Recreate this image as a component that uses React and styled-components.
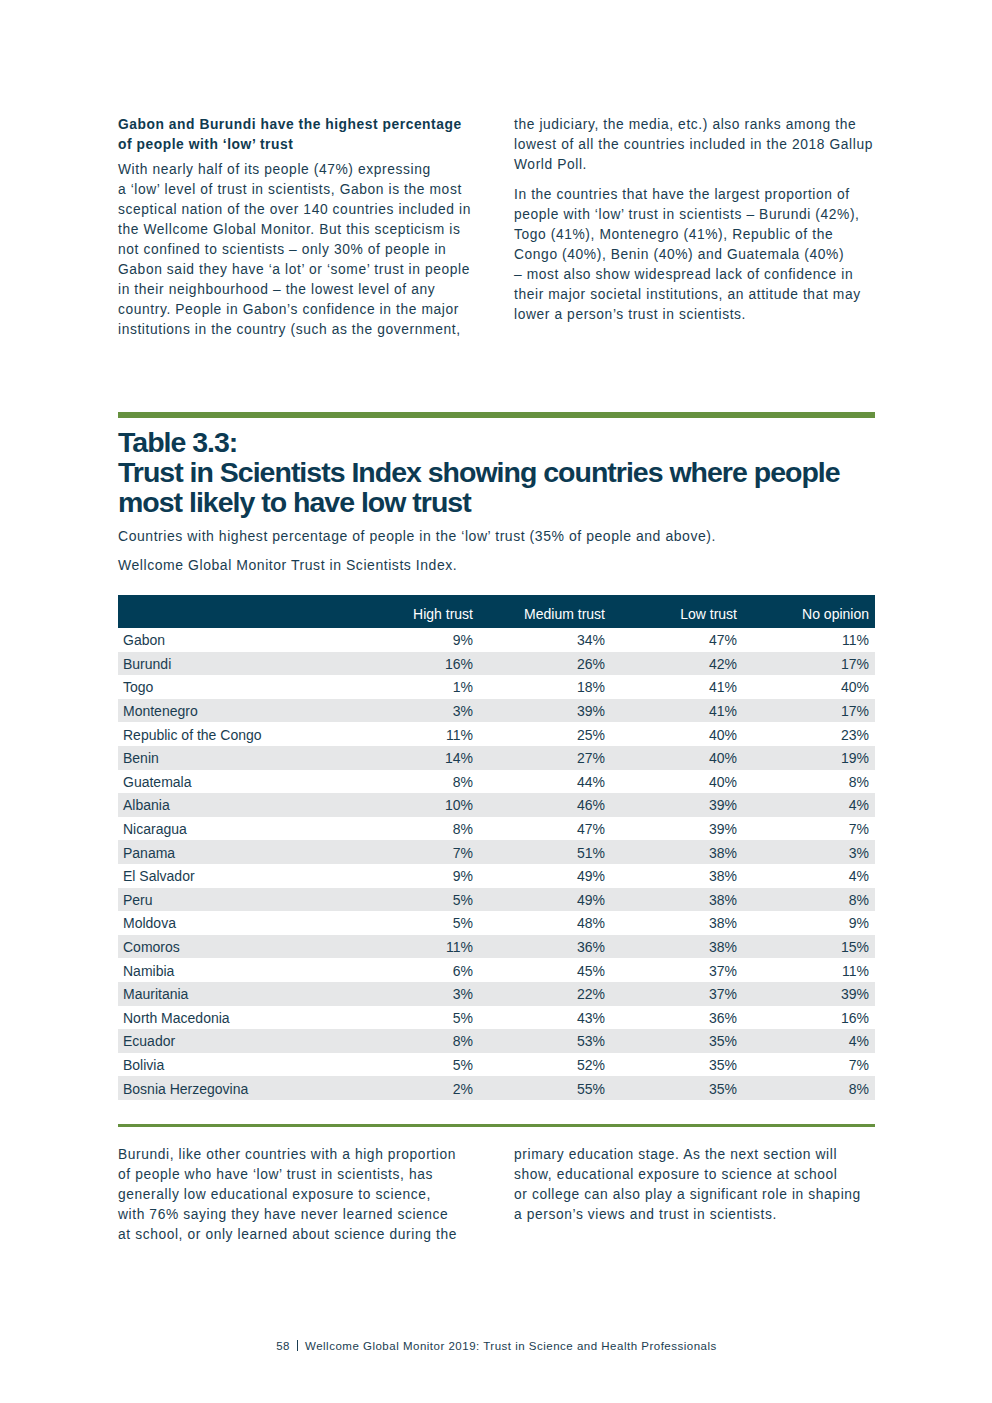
import React from "react";
import styled, { createGlobalStyle } from "styled-components";

const GlobalStyle = createGlobalStyle`
  html, body {
    margin: 0;
    padding: 0;
    background: #ffffff;
  }
  body {
    font-family: "Liberation Sans", Arial, sans-serif;
    color: #163a4e;
  }
`;

const Page = styled.div`
  width: 992px;
  height: 1403px;
  box-sizing: border-box;
  padding: 115px 117px 0 118px;
  display: flex;
  flex-direction: column;
`;

const Columns = styled.div`
  display: grid;
  grid-template-columns: 357px 361px;
  column-gap: 39px;
  margin-top: ${(p) => p.$top || 0}px;
`;

const Column = styled.div`
  display: flex;
  flex-direction: column;
  gap: ${(p) => p.$gap || 0}px;
`;

const Lead = styled.div`
  font-weight: bold;
  font-size: 13.8px;
  line-height: 20px;
  letter-spacing: 0.55px;
  color: #0f3a50;
`;

const Para = styled.div`
  font-size: 13.8px;
  line-height: 20px;
  letter-spacing: 0.6px;
  color: #1a3d51;
`;

const Line = styled.span`
  display: block;
  white-space: nowrap;
`;

const Rule = styled.div`
  height: ${(p) => p.$thick}px;
  background: #66913f;
  margin-top: ${(p) => p.$top}px;
`;

const Title = styled.h2`
  margin: 9px 0 0;
  font-family: "Liberation Sans", sans-serif;
  font-weight: bold;
  font-size: 28.5px;
  line-height: 30px;
  letter-spacing: -1px;
  color: #0c3a52;
`;

const Caption = styled.p`
  margin: 9px 0 0;
  font-family: "Liberation Sans", sans-serif;
  font-size: 14px;
  line-height: 20px;
  letter-spacing: 0.55px;
  color: #1a3d51;
`;

const Table = styled.table`
  margin-top: 20px;
  width: 757px;
  border-collapse: collapse;
  font-family: "Liberation Sans", sans-serif;
  font-size: 14px;
  color: #1a3d51;
`;

const HeadCell = styled.th`
  background: #013d57;
  color: #ffffff;
  font-weight: normal;
  height: 33px;
  padding: 4px 6px 0 5px;
  text-align: ${(p) => (p.$left ? "left" : "right")};
  width: ${(p) => (p.$left ? "auto" : "132px")};
  box-sizing: border-box;
`;

const Row = styled.tr`
  background: ${(p) => (p.$shade ? "#e6e7e8" : "#ffffff")};
`;

const Cell = styled.td`
  height: 23.6px;
  padding: 1px 6px 0 5px;
  text-align: ${(p) => (p.$left ? "left" : "right")};
  box-sizing: border-box;
`;

const Footer = styled.div`
  margin-top: auto;
  margin-bottom: 51px;
  text-align: center;
  font-size: 11.5px;
  letter-spacing: 0.5px;
  color: #1a3d51;
`;

const Sep = styled.span`
  display: inline-block;
  width: 1px;
  height: 11px;
  background: #1a3d51;
  margin: 0 7px;
  vertical-align: -1px;
`;

const rows = [
  ["Gabon", "9%", "34%", "47%", "11%"],
  ["Burundi", "16%", "26%", "42%", "17%"],
  ["Togo", "1%", "18%", "41%", "40%"],
  ["Montenegro", "3%", "39%", "41%", "17%"],
  ["Republic of the Congo", "11%", "25%", "40%", "23%"],
  ["Benin", "14%", "27%", "40%", "19%"],
  ["Guatemala", "8%", "44%", "40%", "8%"],
  ["Albania", "10%", "46%", "39%", "4%"],
  ["Nicaragua", "8%", "47%", "39%", "7%"],
  ["Panama", "7%", "51%", "38%", "3%"],
  ["El Salvador", "9%", "49%", "38%", "4%"],
  ["Peru", "5%", "49%", "38%", "8%"],
  ["Moldova", "5%", "48%", "38%", "9%"],
  ["Comoros", "11%", "36%", "38%", "15%"],
  ["Namibia", "6%", "45%", "37%", "11%"],
  ["Mauritania", "3%", "22%", "37%", "39%"],
  ["North Macedonia", "5%", "43%", "36%", "16%"],
  ["Ecuador", "8%", "53%", "35%", "4%"],
  ["Bolivia", "5%", "52%", "35%", "7%"],
  ["Bosnia Herzegovina", "2%", "55%", "35%", "8%"],
];

const leftTop = [
  "With nearly half of its people (47%) expressing",
  "a \u2018low\u2019 level of trust in scientists, Gabon is the most",
  "sceptical nation of the over 140 countries included in",
  "the Wellcome Global Monitor. But this scepticism is",
  "not confined to scientists \u2013 only 30% of people in",
  "Gabon said they have \u2018a lot\u2019 or \u2018some\u2019 trust in people",
  "in their neighbourhood \u2013 the lowest level of any",
  "country. People in Gabon\u2019s confidence in the major",
  "institutions in the country (such as the government,",
];

const rightTop1 = [
  "the judiciary, the media, etc.) also ranks among the",
  "lowest of all the countries included in the 2018 Gallup",
  "World Poll.",
];

const rightTop2 = [
  "In the countries that have the largest proportion of",
  "people with \u2018low\u2019 trust in scientists \u2013 Burundi (42%),",
  "Togo (41%), Montenegro (41%), Republic of the",
  "Congo (40%), Benin (40%) and Guatemala (40%)",
  "\u2013 most also show widespread lack of confidence in",
  "their major societal institutions, an attitude that may",
  "lower a person\u2019s trust in scientists.",
];

const leftBottom = [
  "Burundi, like other countries with a high proportion",
  "of people who have \u2018low\u2019 trust in scientists, has",
  "generally low educational exposure to science,",
  "with 76% saying they have never learned science",
  "at school, or only learned about science during the",
];

const rightBottom = [
  "primary education stage. As the next section will",
  "show, educational exposure to science at school",
  "or college can also play a significant role in shaping",
  "a person\u2019s views and trust in scientists.",
];

const Lines = ({ lines }) => lines.map((l, i) => <Line key={i}>{l}</Line>);

export default function App() {
  return (
    <>
      <GlobalStyle />
      <Page>
        <Columns>
          <Column $gap={5}>
            <Lead>
              <Line>Gabon and Burundi have the highest percentage</Line>
              <Line>of people with {"\u2018"}low{"\u2019"} trust</Line>
            </Lead>
            <Para>
              <Lines lines={leftTop} />
            </Para>
          </Column>
          <Column $gap={10}>
            <Para>
              <Lines lines={rightTop1} />
            </Para>
            <Para>
              <Lines lines={rightTop2} />
            </Para>
          </Column>
        </Columns>

        <Rule $thick={6} $top={72} />
        <Title>
          Table 3.3:
          <br />
          Trust in Scientists Index showing countries where people
          <br />
          most likely to have low trust
        </Title>
        <Caption>
          Countries with highest percentage of people in the {"\u2018"}low{"\u2019"} trust (35% of people and above).
        </Caption>
        <Caption>Wellcome Global Monitor Trust in Scientists Index.</Caption>

        <Table>
          <thead>
            <tr>
              <HeadCell $left></HeadCell>
              <HeadCell>High trust</HeadCell>
              <HeadCell>Medium trust</HeadCell>
              <HeadCell>Low trust</HeadCell>
              <HeadCell>No opinion</HeadCell>
            </tr>
          </thead>
          <tbody>
            {rows.map((r, i) => (
              <Row key={r[0]} $shade={i % 2 === 1}>
                {r.map((c, j) => (
                  <Cell key={j} $left={j === 0}>
                    {c}
                  </Cell>
                ))}
              </Row>
            ))}
          </tbody>
        </Table>

        <Rule $thick={3} $top={24} />
        <Columns $top={18}>
          <Para>
            <Lines lines={leftBottom} />
          </Para>
          <Para>
            <Lines lines={rightBottom} />
          </Para>
        </Columns>

        <Footer>
          58
          <Sep />
          Wellcome Global Monitor 2019: Trust in Science and Health Professionals
        </Footer>
      </Page>
    </>
  );
}
